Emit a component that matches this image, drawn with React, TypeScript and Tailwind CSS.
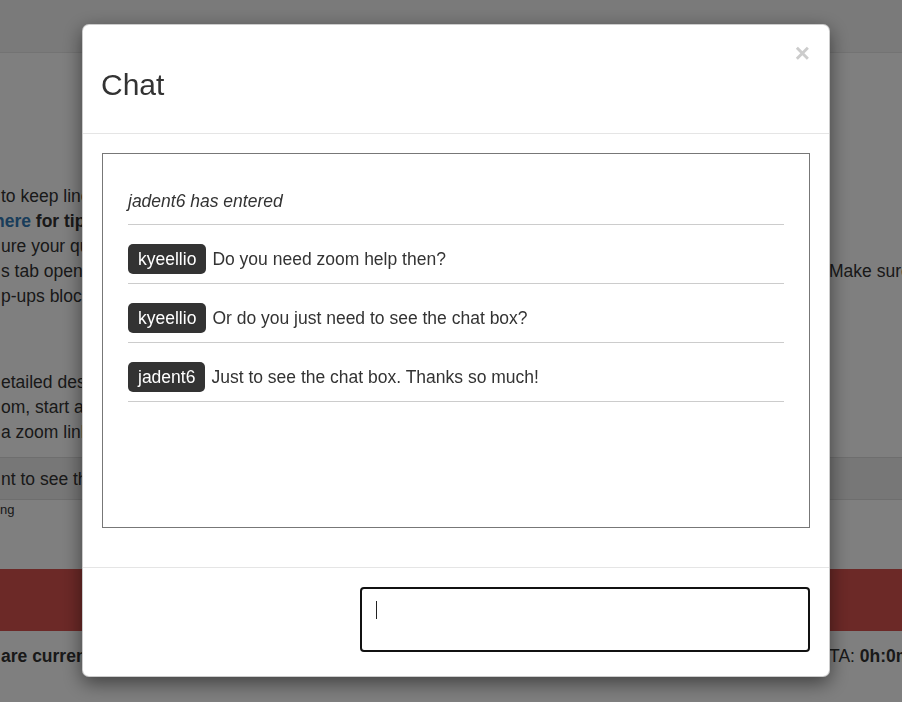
import React from 'react';

type Msg = { user?: string; text: string };

const messages: Msg[] = [
  { text: 'jadent6 has entered' },
  { user: 'kyeellio', text: 'Do you need zoom help then?' },
  { user: 'kyeellio', text: 'Or do you just need to see the chat box?' },
  { user: 'jadent6', text: 'Just to see the chat box. Thanks so much!' },
];

function Line({ left, right }: { left: React.ReactNode; right?: React.ReactNode }) {
  return (
    <div className="flex h-[25px] items-center justify-between whitespace-nowrap">
      <div className="min-w-0 overflow-hidden pl-[1px]">{left}</div>
      {right && <div className="w-[73px] shrink-0 overflow-hidden">{right}</div>}
    </div>
  );
}

function Background() {
  return (
    <div className="h-[702px] overflow-hidden bg-white text-[17.5px] text-[#333] [font-family:'Liberation_Sans',Arial,sans-serif]">
      {/* navbar */}
      <div className="h-[53px] border-b border-[#e7e7e7] bg-[#f5f5f5]" />

      <div className="mt-[131px]">
        <Line left="to keep lines open while you wait" />
        <Line
          left={
            <b className="-ml-[7px] block">
              <span className="text-[#337ab7]">here</span> for tips
            </b>
          }
        />
        <Line left="ure your question is clear" />
        <Line left="s tab open while you wait." right="Make sure" />
        <Line left="p-ups blocked" />
      </div>

      <div className="mt-[61px]">
        <Line left="etailed description" />
        <Line left="om, start a meeting" />
        <Line left="a zoom link" />
      </div>

      <div className="mt-[12px] flex h-[43px] items-center border-y border-[#ddd] bg-[#eee] whitespace-nowrap pl-[1px] pt-[1px]">
        nt to see the chat box
      </div>
      <div className="h-[20px] pt-[2px] text-[13px] leading-[16px]">ng</div>

      <div className="mt-[49px] h-[62px] bg-[#d9534f]" />

      <div className="mt-[13px]">
        <Line
          left={<b>are currently waiting</b>}
          right={
            <span>
              TA: <b>0h:0m</b>
            </span>
          }
        />
      </div>
    </div>
  );
}

function ChatRow({ msg }: { msg: Msg }) {
  return (
    <div className="flex h-[59px] items-start border-b border-[#ccc] pt-[19px]">
      <div className="flex h-[30px] items-center">
        {msg.user ? (
          <>
            <span className="flex h-[30px] items-center rounded-[5px] bg-[#333] px-[10px] text-white">
              {msg.user}
            </span>
            <span className="ml-[6px]">{msg.text}</span>
          </>
        ) : (
          <i className="pt-[3px]">{msg.text}</i>
        )}
      </div>
    </div>
  );
}

export default function App() {
  return (
    <div className="relative h-[702px] w-full overflow-hidden">
      <Background />

      {/* backdrop + modal */}
      <div className="fixed inset-0 bg-black/50 pl-[82px] pt-[24px] [font-family:'Liberation_Sans',Arial,sans-serif]">
        <div className="relative w-[748px] rounded-[7px] border border-black/20 bg-white text-[17.5px] leading-[25px] text-[#333] shadow-[0_6px_19px_rgba(0,0,0,0.5)]">
          <div className="h-[109px] border-b border-[#e5e5e5] pl-[18px] pr-[19px] pt-[43px]">
            <h2 className="text-[30px] leading-[33px] font-normal">Chat</h2>
          </div>
          <span className="absolute right-[19px] top-[15px] text-[26px] leading-none font-bold text-[#ccc]">
            ×
          </span>

          <div className="px-[19px] pb-[39px] pt-[19px]">
            <div className="h-[375px] border border-[#777] px-[25px] pt-[12px]">
              {messages.map((m, i) => (
                <ChatRow key={i} msg={m} />
              ))}
            </div>
          </div>

          <div className="flex justify-end border-t border-[#e5e5e5] px-[19px] pb-[24px] pt-[19px]">
            <div className="h-[65px] w-[450px] rounded-[4px] border-2 border-[#111] pl-[14px] pt-[12px]">
              <div className="h-[18px] w-px bg-[#222]" />
            </div>
          </div>
        </div>
      </div>
    </div>
  );
}
